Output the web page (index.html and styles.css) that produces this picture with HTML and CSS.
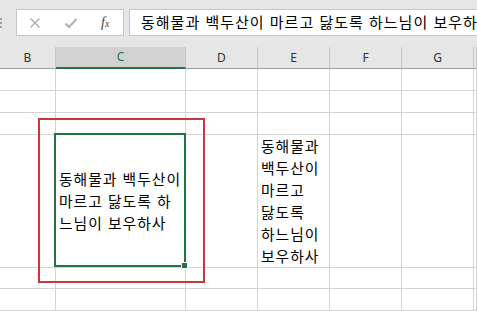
FILE: index.html
```
<!DOCTYPE html>
<html lang="ko">
<head>
  <meta charset="UTF-8" />
  <title>Sheet</title>
  <link rel="stylesheet" href="styles.css">
</head>
<body>
  <div class="formula-bar">
    <div class="grip"><span></span><span></span><span></span></div>
    <div class="fx-box">
      <svg class="icon" width="12" height="12" viewBox="0 0 12 12"><path d="M1.5 1.5 L10.5 10.5 M10.5 1.5 L1.5 10.5" stroke="#a8a8a8" stroke-width="1.3" fill="none"/></svg>
      <svg class="icon" width="14" height="12" viewBox="0 0 14 12"><path d="M1.5 6.5 L5 10 L12.5 2" stroke="#b0b0b0" stroke-width="2" fill="none"/></svg>
      <span class="fx">f<small>x</small></span>
    </div>
    <div class="formula-input">동해물과 백두산이 마르고 닳도록 하느님이 보우하사</div>
  </div>

  <div class="sheet">
    <div class="row head">
      <div class="cell">B</div>
      <div class="cell active">C</div>
      <div class="cell">D</div>
      <div class="cell">E</div>
      <div class="cell">F</div>
      <div class="cell">G</div>
      <div class="cell"></div>
    </div>
    <div class="row">
      <div class="cell"></div><div class="cell"></div><div class="cell"></div><div class="cell"></div><div class="cell"></div><div class="cell"></div><div class="cell"></div>
    </div>
    <div class="row">
      <div class="cell"></div><div class="cell"></div><div class="cell"></div><div class="cell"></div><div class="cell"></div><div class="cell"></div><div class="cell"></div>
    </div>
    <div class="row">
      <div class="cell"></div><div class="cell"></div><div class="cell"></div><div class="cell"></div><div class="cell"></div><div class="cell"></div><div class="cell"></div>
    </div>
    <div class="row tall">
      <div class="cell"></div>
      <div class="cell text middle">동해물과 백두산이<br>마르고 닳도록 하<br>느님이 보우하사</div>
      <div class="cell"></div>
      <div class="cell text">동해물과<br>백두산이<br>마르고<br>닳도록<br>하느님이<br>보우하사</div>
      <div class="cell"></div><div class="cell"></div><div class="cell"></div>
    </div>
    <div class="row">
      <div class="cell"></div><div class="cell"></div><div class="cell"></div><div class="cell"></div><div class="cell"></div><div class="cell"></div><div class="cell"></div>
    </div>
    <div class="row">
      <div class="cell"></div><div class="cell"></div><div class="cell"></div><div class="cell"></div><div class="cell"></div><div class="cell"></div><div class="cell"></div>
    </div>

    <!-- selection and annotation lie over the grid -->
    <div class="selection"><div class="handle"></div></div>
    <div class="mark"></div>
  </div>
</body>
</html>
```

FILE: styles.css
```
body {
  margin: 0;
  width: 477px;
  height: 311px;
  overflow: hidden;
  background: #fff;
  font-family: "Noto Sans CJK KR", "Noto Sans", sans-serif;
  color: #000;
}

.formula-bar {
  height: 47px;
  background: #e6e6e6;
  display: flex;
  align-items: flex-start;
  padding-top: 9px;
  box-sizing: border-box;
}
.grip {
  width: 16px;
  display: flex;
  flex-direction: column;
  gap: 2px;
  padding-top: 9px;
}
.grip span {
  width: 2px;
  height: 2px;
  background: #a0a0a0;
}
.fx-box {
  width: 108px;
  height: 27px;
  background: #fff;
  border: 1px solid #c6c6c6;
  box-sizing: border-box;
  display: flex;
  align-items: center;
  padding-left: 12px;
}
.icon { display: block; }
.fx-box .icon:first-child { margin-right: 23px; }
.fx-box .icon:nth-child(2) { margin-right: 23px; }
.fx {
  font-family: "Liberation Serif", serif;
  font-style: italic;
  font-size: 14px;
  color: #444;
}
.fx small { font-size: 10px; }
.formula-input {
  margin-left: 5px;
  flex: 1;
  height: 27px;
  background: #fff;
  border: 1px solid #c6c6c6;
  border-right: none;
  box-sizing: border-box;
  padding-left: 11px;
  font-size: 15px;
  letter-spacing: 1px;
  line-height: 24px;
  white-space: nowrap;
  overflow: hidden;
}

.sheet {
  position: relative;
}
.row {
  display: grid;
  grid-template-columns: 56px 130px 72px 72px 72px 72px 1fr;
  height: 22px;
}
.cell {
  box-sizing: border-box;
  border-right: 1px solid #d4d4d4;
  border-bottom: 1px solid #d4d4d4;
}
.head {
  background: #e6e6e6;
}
.head .cell {
  font-family: "Noto Sans", sans-serif;
  font-size: 12px;
  line-height: 21px;
  text-align: center;
  color: #333;
  border-right-color: #c8c8c8;
  border-bottom-color: #9e9e9e;
}
.head .cell.active {
  background: #d2d2d2;
  color: #217346;
  border-bottom: 2px solid #217346;
  line-height: 20px;
}
.tall { height: 132px; }
.text {
  font-size: 14.8px;
  letter-spacing: 1px;
  line-height: 22px;
  padding-left: 3px;
  white-space: nowrap;
}
.middle {
  display: flex;
  align-items: center;
}

.selection {
  position: absolute;
  left: 54px;
  top: 86px;
  width: 132px;
  height: 134px;
  border: 2px solid #217346;
  box-sizing: border-box;
}
.handle {
  position: absolute;
  right: -4px;
  bottom: -4px;
  width: 5px;
  height: 5px;
  background: #217346;
  border: 1px solid #fff;
}
.mark {
  position: absolute;
  left: 38px;
  top: 71px;
  width: 167px;
  height: 165px;
  border: 2px solid #c8373c;
  box-sizing: border-box;
}
```
